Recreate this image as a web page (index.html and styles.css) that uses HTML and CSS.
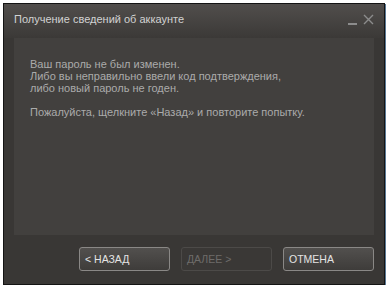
FILE: index.html
```html
<!DOCTYPE html>
<html lang="ru">
<head>
    <meta charset="UTF-8">
    <title>Получение сведений об аккаунте</title>
    <link rel="stylesheet" href="styles.css">
</head>
<body>
    <div class="window">
        <div class="titlebar">
            <span class="title">Получение сведений об аккаунте</span>
            <div class="controls">
                <span class="min"></span>
                <svg class="close" width="11" height="11" viewBox="0 0 11 11">
                    <path d="M1 1 L10 10 M10 1 L1 10" stroke="#8c8c8c" stroke-width="1.4"/>
                </svg>
            </div>
        </div>
        <div class="panel">
            <p>Ваш пароль не был изменен.<br>
            Либо вы неправильно ввели код подтверждения,<br>
            либо новый пароль не годен.</p>
            <p>Пожалуйста, щелкните «Назад» и повторите попытку.</p>
        </div>
        <div class="buttons">
            <button class="btn">&lt; НАЗАД</button>
            <button class="btn" disabled>ДАЛЕЕ &gt;</button>
            <button class="btn">ОТМЕНА</button>
        </div>
    </div>
</body>
</html>
```

FILE: styles.css
```css
body {
    margin: 0;
    background: #fff;
    font-family: Arial, "Liberation Sans", sans-serif;
}
.window {
    margin: 3px 0 0 3px;
    width: 380px;
    height: 280px;
    border: 1px solid #141414;
    box-shadow: 1px 1px 0 #5a7894;
    background: #393735;
    display: flex;
    flex-direction: column;
}
.titlebar {
    height: 34px;
    flex-shrink: 0;
    display: flex;
    align-items: flex-start;
    padding: 9px 10px 0 10px;
    box-sizing: border-box;
    background: linear-gradient(#514e4c, #3b3937);
}
.title {
    font-size: 11px;
    color: #d2d2d2;
    flex: 1;
}
.controls {
    display: flex;
    align-items: center;
    gap: 6px;
    margin-top: 1px;
}
.min {
    width: 9px;
    height: 2px;
    background: #8c8c8c;
    margin-top: 9px;
}
.panel {
    margin: 0 10px;
    height: 197px;
    background: #42403e;
    padding: 20px 16px 0 16px;
    box-sizing: border-box;
    font-size: 11px;
    line-height: 12px;
    color: #ababab;
}
.panel p {
    margin: 0 0 12px 0;
}
.buttons {
    display: flex;
    justify-content: flex-end;
    gap: 11px;
    padding: 12px 10px 0 0;
}
.btn {
    width: 91px;
    height: 24px;
    padding: 0 0 0 5px;
    text-align: left;
    font-family: Arial, "Liberation Sans", sans-serif;
    font-size: 10.5px;
    color: #e4e4e4;
    background: linear-gradient(#52504e, #3e3c3a);
    border: 1px solid #8a8886;
    border-radius: 3px;
}
.btn:disabled {
    background: #3a3836;
    border-color: #4c4a48;
    color: #6e6c6a;
}
```
